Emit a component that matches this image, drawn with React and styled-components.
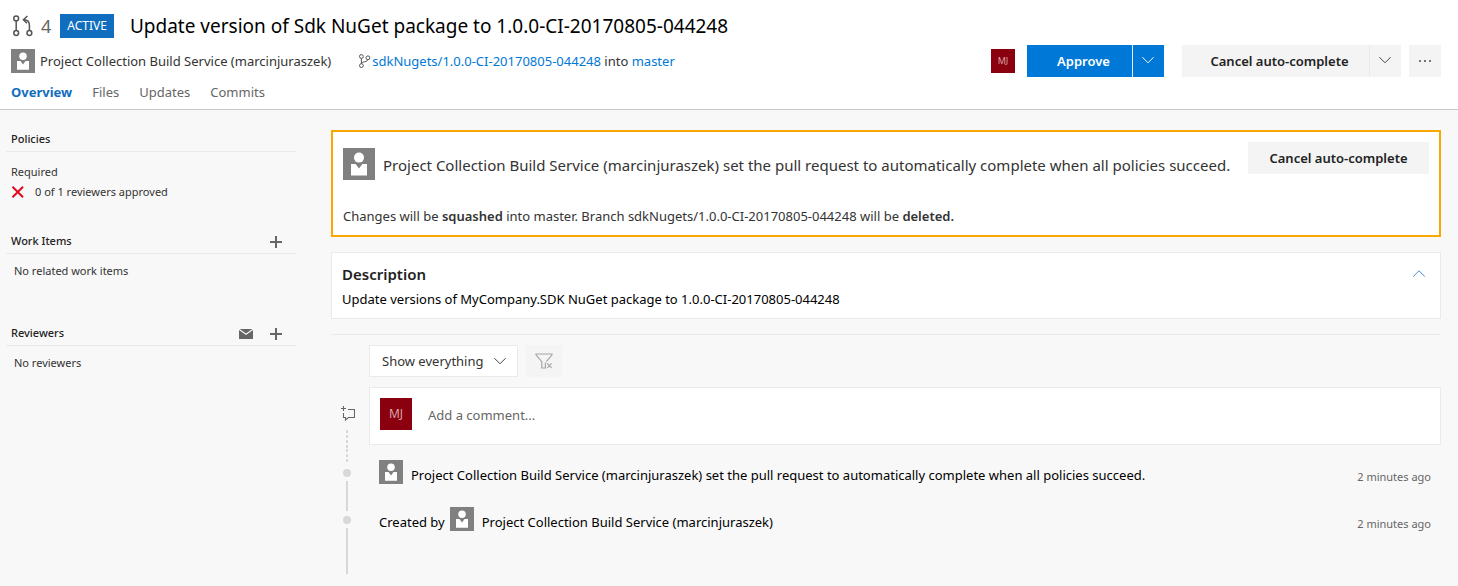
import React from 'react';
import styled, { createGlobalStyle } from 'styled-components';

const GlobalStyle = createGlobalStyle`
  *, *::before, *::after { box-sizing: border-box; }
  html, body { margin: 0; min-height: 100%; background: #f8f8f8; }
  body, button, input, select {
    font-family: 'Noto Sans', 'Open Sans', sans-serif;
    font-size: 13px;
    line-height: 20px;
    color: #333;
  }
  h1, h2, p, ul { margin: 0; padding: 0; font: inherit; }
  ul { list-style: none; }
  a { color: #106ebe; text-decoration: none; }
  svg { display: block; flex: none; }
`;

const Header = styled.header`
  display: flex;
  justify-content: space-between;
  gap: 24px;
  padding: 14px 17px 0 11px;
  background: #fff;
  border-bottom: 1px solid #c8c8c8;
`;

const HeaderInfo = styled.div`
  flex: 1;
  min-width: 0;
`;

const TitleRow = styled.div`
  display: flex;
  align-items: center;
  height: 24px;
`;

const Number = styled.span`
  margin: 0 9px 0 8px;
  font-size: 18px;
  color: #666;
`;

const Badge = styled.span`
  padding: 2px 7px;
  margin-right: 16px;
  background: #106ebe;
  color: #fff;
  font-size: 12px;
`;

const Title = styled.h1`
  font-size: 19px;
  line-height: 24px;
  color: #000;
`;

const MetaRow = styled.div`
  display: flex;
  align-items: center;
  margin-top: 11px;
  height: 24px;
`;

const Author = styled.span`
  margin: 0 27px 0 5px;
`;

const BranchText = styled.span`
  margin-left: 1px;
  a { color: #0078d7; }
`;

const Tabs = styled.nav`
  display: flex;
  gap: 20px;
  padding: 9px 0 7px;
`;

const Tab = styled.a`
  color: ${(p) => (p.$active ? '#106ebe' : '#666')};
  font-weight: ${(p) => (p.$active ? 700 : 400)};
`;

const Actions = styled.div`
  display: flex;
  align-items: center;
  height: 32px;
  margin-top: 31px;
`;

const SplitButton = styled.div`
  display: flex;
  margin-left: ${(p) => p.$gap}px;
`;

const Button = styled.button`
  display: flex;
  align-items: center;
  justify-content: center;
  width: ${(p) => p.$width}px;
  height: 32px;
  flex: none;
  padding: 0 0 0 ${(p) => (p.$lead ? 8 : 0)}px;
  border: 0;
  background: ${(p) => (p.$primary ? '#0078d7' : '#f4f4f4')};
  color: ${(p) => (p.$primary ? '#fff' : '#222')};
  font-weight: 600;
  & + & {
    padding: 0 2px 2px 0;
    border-left: 1px solid ${(p) => (p.$primary ? '#005a9e' : '#eaeaea')};
  }
`;

const Initials = styled.span`
  display: flex;
  align-items: center;
  justify-content: center;
  flex: none;
  width: ${(p) => p.$size}px;
  height: ${(p) => p.$size}px;
  background: #8a000f;
  color: #d9a3a8;
  font-size: ${(p) => (p.$size > 24 ? 12 : 9)}px;
`;

const Body = styled.div`
  display: flex;
  gap: 35px;
  padding: 20px 17px 12px 6px;
`;

const Sidebar = styled.aside`
  flex: none;
  width: 290px;
`;

const Section = styled.section`
  margin-bottom: ${(p) => p.$after}px;
`;

const SectionHead = styled.div`
  display: flex;
  justify-content: space-between;
  height: 22px;
  padding: 0 14px 0 5px;
  border-bottom: 1px solid #eaeaea;
`;

const SectionTitle = styled.h2`
  font-size: 11px;
  font-weight: 500;
  line-height: 18px;
  color: #222;
`;

const Tools = styled.div`
  display: flex;
  align-items: center;
  gap: 17px;
  padding-bottom: 2px;
`;

const IconButton = styled.button`
  display: flex;
  align-items: center;
  padding: 0;
  border: 0;
  background: none;
`;

const SectionBody = styled.div`
  padding: ${(p) => p.$top}px 8px 0 ${(p) => p.$left}px;
  font-size: 11px;
`;

const Policy = styled.p`
  display: flex;
  align-items: center;
  gap: 10px;
`;

const Main = styled.main`
  flex: 1;
  min-width: 0;
`;

const Banner = styled.section`
  padding: 10px 10px 8px;
  border: 2px solid #f8a800;
  background: #fff;
`;

const BannerTop = styled.div`
  display: flex;
  justify-content: space-between;
  align-items: flex-start;
  gap: 12px;
`;

const BannerMessage = styled.div`
  display: flex;
  align-items: center;
  gap: 8px;
  padding-top: 6px;
  font-size: 15px;
  p { padding-top: 2px; }
`;

const BannerNote = styled.p`
  && { padding-top: 26px; }
  line-height: 21px;
  b { font-weight: 600; }
`;

const Description = styled.section`
  display: flex;
  justify-content: space-between;
  align-items: flex-start;
  margin-top: 15px;
  padding: 10px 14px 6px 10px;
  border: 1px solid #eaeaea;
  background: #fff;
  p { line-height: 26px; color: #000; }
`;

const DescriptionTitle = styled.h2`
  font-size: 15px;
  font-weight: 600;
  line-height: 23px;
  color: #222;
`;

const Collapse = styled(IconButton)`
  padding-top: 6px;
`;

const Discussion = styled.section`
  margin-top: 15px;
  padding-top: 10px;
  border-top: 1px solid #eaeaea;
`;

const Filters = styled.div`
  display: flex;
  gap: 8px;
  margin-left: 38px;
`;

const SelectBox = styled.label`
  display: grid;
  grid-template-columns: 1fr 24px;
  align-items: center;
  width: 149px;
  height: 32px;
  border: 1px solid #eaeaea;
  background: #fff;
  svg { grid-area: 1 / 2; pointer-events: none; }
`;

const Select = styled.select`
  grid-area: 1 / 1 / 2 / 3;
  appearance: none;
  width: 100%;
  height: 30px;
  padding: 0 0 0 12px;
  border: 0;
  background: transparent;
`;

const Entry = styled.li`
  display: flex;
  gap: 6px;
`;

const Rail = styled.div`
  display: flex;
  flex-direction: column;
  align-items: center;
  flex: none;
  width: 32px;
`;

const Line = styled.span`
  width: 2px;
  flex: ${(p) => (p.$short ? '0 0 15px' : '1')};
  background: ${(p) =>
    p.$dashed
      ? 'repeating-linear-gradient(#d8d8d8 0 3px, transparent 3px 5px)'
      : '#d8d8d8'};
`;

const Dot = styled.span`
  width: 8px;
  height: 8px;
  margin: 5px 0 4px;
  border-radius: 50%;
  background: #d8d8d8;
`;

const RailIcon = styled.span`
  margin: 18px 0 9px;
`;

const CommentBox = styled.div`
  display: flex;
  align-items: flex-start;
  flex: 1;
  gap: 16px;
  height: 58px;
  margin-bottom: 4px;
  padding: 10px;
  border: 1px solid #eaeaea;
  background: #fff;
`;

const CommentInput = styled.input`
  flex: 1;
  height: 34px;
  padding: 0;
  border: 0;
  background: none;
  &::placeholder { color: #666; opacity: 1; }
`;

const Thread = styled.ul`
  margin-top: 10px;
`;

const EventText = styled.div`
  display: flex;
  align-items: center;
  flex: 1;
  gap: 5px;
  height: 47px;
  margin-bottom: ${(p) => (p.$last ? 31 : 0)}px;
  padding: 0 10px 2px;
  color: #000;
`;

const Person = styled.span`
  display: flex;
  align-items: center;
  gap: 8px;
  & > span { padding-top: 6px; }
`;

const EventLabel = styled.span`
  padding-top: 6px;
`;

const Time = styled.time`
  margin-left: auto;
  padding-top: 10px;
  font-size: 11px;
  color: #666;
`;

function ServiceAvatar({ size }) {
  return (
    <svg width={size} height={size} viewBox="0 0 32 32" aria-hidden="true">
      <path fill="#808080" d="M0 0h32v32H0z" />
      <circle cx="16" cy="9.6" r="5" fill="#fff" />
      <path fill="#fff" d="M8 16h4.6l3.4 4.6 3.4-4.6H24v11.6H8z" />
    </svg>
  );
}

function Chevron({ color = '#444', up }) {
  return (
    <svg width="14" height="10" viewBox="0 0 14 10" fill="none" stroke={color} aria-hidden="true">
      <path d={up ? 'M1.2 7.6 7 1.8l5.8 5.8' : 'M1.4 2.2 7 7.8l5.6-5.6'} />
    </svg>
  );
}

function PlusIcon() {
  return (
    <svg width="12" height="12" viewBox="0 0 12 12" fill="#666" aria-hidden="true">
      <path d="M5 0h2v5h5v2H7v5H5V7H0V5h5z" />
    </svg>
  );
}

function PullRequestIcon() {
  return (
    <svg width="22" height="22" viewBox="0 0 22 22" fill="none" stroke="#555" strokeWidth="1.5" aria-hidden="true">
      <circle cx="5.2" cy="3.4" r="2.4" />
      <circle cx="5.2" cy="18" r="2.4" />
      <circle cx="18.4" cy="18" r="2.4" />
      <path d="M5.2 5.8v9.8M18.4 15.6V10Q18.400 5 12.800 4.800M16.400 1 12.400 4.800l3.600 3.400" />
    </svg>
  );
}

function BranchIcon() {
  return (
    <svg width="13" height="16" viewBox="0 0 13 16" fill="none" stroke="#555" aria-hidden="true">
      <circle cx="3.4" cy="3.5" r="1.9" />
      <circle cx="9.9" cy="4.8" r="1.9" />
      <circle cx="3.4" cy="12.6" r="1.9" />
      <path d="M3.4 5.4v5.3M9.7 6.7Q9 8.8 6.6 8.8 4 8.8 3.5 10.6" />
    </svg>
  );
}

function MailIcon() {
  return (
    <svg width="14" height="10" viewBox="0 0 14 10" aria-hidden="true">
      <path fill="#666" d="M0 0h14v10H0z" />
      <path d="m0 .2 7 5 7-5" fill="none" stroke="#f8f8f8" strokeWidth="1.1" />
    </svg>
  );
}

function FilterClearIcon() {
  return (
    <svg width="18" height="16" viewBox="0 0 18 16" fill="none" stroke="#a6a6a6" strokeWidth="1.2" aria-hidden="true">
      <path d="M11.4 8.6 17 1.8V1H1v.8l5.8 6.8V15H10.4V9.6M12.2 10.4l4.4 4.4M16.6 10.4l-4.4 4.4" />
    </svg>
  );
}

function AddCommentIcon() {
  return (
    <svg width="16" height="16" viewBox="0 0 16 16" fill="none" stroke="#666" strokeWidth="1.1" aria-hidden="true">
      <path d="M4.500 1v5M2 3.500h5M9 4.500h6.500v8H9.500L6.500 15v-2.500h-2V8" />
    </svg>
  );
}

const AUTHOR = 'Project Collection Build Service (marcinjuraszek)';
const AUTO_COMPLETE = 'set the pull request to automatically complete when all policies succeed.';

export default function App() {
  return (
    <>
      <GlobalStyle />
      <Header>
        <HeaderInfo>
          <TitleRow>
            <PullRequestIcon />
            <Number>4</Number>
            <Badge>ACTIVE</Badge>
            <Title>Update version of Sdk NuGet package to 1.0.0-CI-20170805-044248</Title>
          </TitleRow>
          <MetaRow>
            <ServiceAvatar size={24} />
            <Author>{AUTHOR}</Author>
            <BranchIcon />
            <BranchText>
              <a href="#branch">sdkNugets/1.0.0-CI-20170805-044248</a> into <a href="#master">master</a>
            </BranchText>
          </MetaRow>
          <Tabs>
            <Tab href="#overview" $active>Overview</Tab>
            <Tab href="#files">Files</Tab>
            <Tab href="#updates">Updates</Tab>
            <Tab href="#commits">Commits</Tab>
          </Tabs>
        </HeaderInfo>
        <Actions>
          <Initials $size={24}>MJ</Initials>
          <SplitButton $gap={12}>
            <Button $primary $lead $width={105}>Approve</Button>
            <Button $primary $width={32} aria-label="Approve options"><Chevron color="#fff" /></Button>
          </SplitButton>
          <SplitButton $gap={18}>
            <Button $lead $width={187}>Cancel auto-complete</Button>
            <Button $width={32} aria-label="Completion options"><Chevron /></Button>
          </SplitButton>
          <SplitButton $gap={8}>
            <Button $width={32} aria-label="More actions">
              <svg width="14" height="2" viewBox="0 0 14 2" fill="#777" aria-hidden="true">
                <path d="M1 0h2v2H1zM6 0h2v2H6zM11 0h2v2h-2z" />
              </svg>
            </Button>
          </SplitButton>
        </Actions>
      </Header>
      <Body>
        <Sidebar>
          <Section $after={30}>
            <SectionHead><SectionTitle>Policies</SectionTitle></SectionHead>
            <SectionBody $top={10} $left={5}>
              <p>Required</p>
              <Policy>
                <svg width="14" height="12" viewBox="0 0 14 12" stroke="#e00b1c" strokeWidth="2" aria-hidden="true">
                  <path d="M1.5.8 12 11.2M12 .8 1.5 11.2" />
                </svg>
                0 of 1 reviewers approved
              </Policy>
            </SectionBody>
          </Section>
          <Section $after={43}>
            <SectionHead>
              <SectionTitle>Work Items</SectionTitle>
              <Tools><IconButton aria-label="Add work item"><PlusIcon /></IconButton></Tools>
            </SectionHead>
            <SectionBody $top={7} $left={8}>No related work items</SectionBody>
          </Section>
          <Section $after={0}>
            <SectionHead>
              <SectionTitle>Reviewers</SectionTitle>
              <Tools>
                <IconButton aria-label="Email reviewers"><MailIcon /></IconButton>
                <IconButton aria-label="Add reviewer"><PlusIcon /></IconButton>
              </Tools>
            </SectionHead>
            <SectionBody $top={7} $left={8}>No reviewers</SectionBody>
          </Section>
        </Sidebar>
        <Main>
          <Banner>
            <BannerTop>
              <BannerMessage>
                <ServiceAvatar size={32} />
                <p>{AUTHOR} {AUTO_COMPLETE}</p>
              </BannerMessage>
              <Button $width={181}>Cancel auto-complete</Button>
            </BannerTop>
            <BannerNote>
              Changes will be <b>squashed</b> into master. Branch sdkNugets/1.0.0-CI-20170805-044248 will be <b>deleted.</b>
            </BannerNote>
          </Banner>
          <Description>
            <div>
              <DescriptionTitle>Description</DescriptionTitle>
              <p>Update versions of MyCompany.SDK NuGet package to 1.0.0-CI-20170805-044248</p>
            </div>
            <Collapse aria-label="Collapse description"><Chevron up color="#3a8ddb" /></Collapse>
          </Description>
          <Discussion>
            <Filters>
              <SelectBox>
                <Select aria-label="Filter discussion" defaultValue="all">
                  <option value="all">Show everything</option>
                </Select>
                <Chevron />
              </SelectBox>
              <SplitButton $gap={0}>
                <Button $width={36} aria-label="Clear filter"><FilterClearIcon /></Button>
              </SplitButton>
            </Filters>
            <Thread>
              <Entry>
                <Rail>
                  <RailIcon><AddCommentIcon /></RailIcon>
                  <Line $dashed />
                </Rail>
                <CommentBox>
                  <Initials $size={32}>MJ</Initials>
                  <CommentInput aria-label="Comment" placeholder="Add a comment..." />
                </CommentBox>
              </Entry>
              <Entry>
                <Rail><Line $short $dashed /><Dot /><Line /></Rail>
                <EventText>
                  <Person><ServiceAvatar size={24} /><span>{AUTHOR} {AUTO_COMPLETE}</span></Person>
                  <Time>2 minutes ago</Time>
                </EventText>
              </Entry>
              <Entry>
                <Rail><Line $short /><Dot /><Line /></Rail>
                <EventText $last>
                  <EventLabel>Created by</EventLabel>
                  <Person><ServiceAvatar size={24} /><span>{AUTHOR}</span></Person>
                  <Time>2 minutes ago</Time>
                </EventText>
              </Entry>
            </Thread>
          </Discussion>
        </Main>
      </Body>
    </>
  );
}
